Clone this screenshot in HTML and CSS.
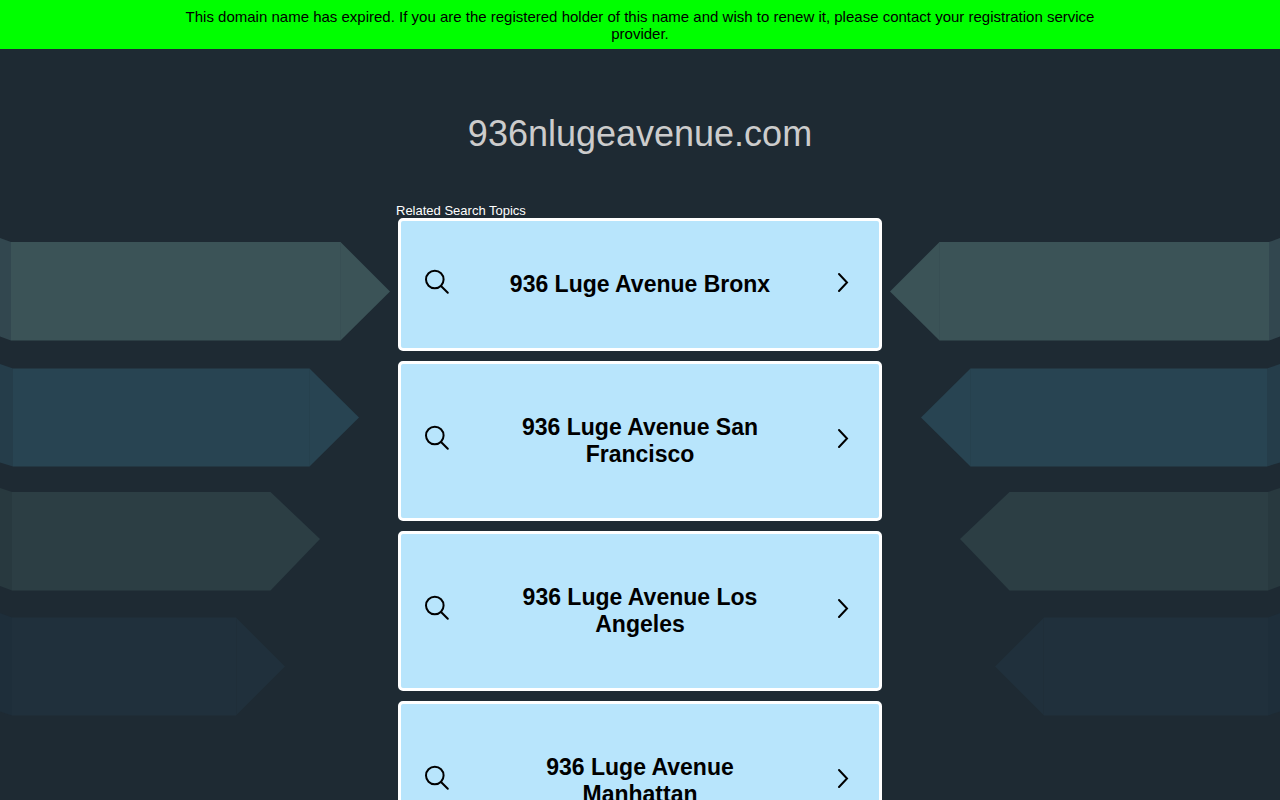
FILE: index.html
```
<!DOCTYPE html>
<html lang="en">
<head>
  <meta charset="UTF-8" />
  <meta name="viewport" content="width=device-width, initial-scale=1" />
  <title>936nlugeavenue.com</title>
  <link rel="stylesheet" href="styles.css">
</head>
<body>

  <!-- shared icons -->
  <svg class="sprite" aria-hidden="true">
    <symbol id="search" viewBox="0 0 26 32">
      <circle cx="9.800" cy="10.500" r="8.800" />
      <path d="M16 17L22.800 23.800" />
    </symbol>
    <symbol id="chevron" viewBox="0 0 26 32">
      <path d="M10 5L18 13.500L10 22" />
    </symbol>
    <symbol id="arrows" viewBox="0 0 390 480">
      <path fill="#32474f" d="M0 2L11 6V104.500L0 100.500z" />
      <path fill="#3b5357" d="M11 6H340.500L390 55.500L340.500 104.500H11z" />
      <path fill="#253d4a" d="M0 128L13 132.500V230.500L0 226.500z" />
      <path fill="#284452" d="M13 132.500H309.500L359 181.500L309.500 230.500H13z" />
      <path fill="#28393f" d="M0 252L12 256V354.500L0 350z" />
      <path fill="#2c3e44" d="M12 256H270.500L320 303L270.500 354.500H12z" />
      <path fill="#1e2e3a" d="M0 377L12 381.500V479.500L0 475.500z" />
      <path fill="#20303c" d="M12 381.500H236L285 430.500L236 479.500H12z" />
      <path fill="none" stroke="#384f54" d="M340.500 7V104" />
      <path fill="none" stroke="#26414e" d="M309.500 133V230" />
      <path fill="none" stroke="#1f2e39" d="M236.500 382V479" />
    </symbol>
  </svg>

  <div class="notice">
    <p>This domain name has expired. If you are the registered holder of this name and wish to renew it, please contact your registration service provider.</p>
  </div>

  <h1>936nlugeavenue.com</h1>

  <main class="content">
    <svg class="arrows" aria-hidden="true"><use href="#arrows" /></svg>

    <section class="topics">
      <h2>Related Search Topics</h2>
      <a class="topic" href="#">
        <svg class="icon" aria-hidden="true"><use href="#search" /></svg>
        <span>936 Luge Avenue Bronx</span>
        <svg class="icon" aria-hidden="true"><use href="#chevron" /></svg>
      </a>
      <a class="topic" href="#">
        <svg class="icon" aria-hidden="true"><use href="#search" /></svg>
        <span>936 Luge Avenue San Francisco</span>
        <svg class="icon" aria-hidden="true"><use href="#chevron" /></svg>
      </a>
      <a class="topic" href="#">
        <svg class="icon" aria-hidden="true"><use href="#search" /></svg>
        <span>936 Luge Avenue Los Angeles</span>
        <svg class="icon" aria-hidden="true"><use href="#chevron" /></svg>
      </a>
      <a class="topic" href="#">
        <svg class="icon" aria-hidden="true"><use href="#search" /></svg>
        <span>936 Luge Avenue Manhattan</span>
        <svg class="icon" aria-hidden="true"><use href="#chevron" /></svg>
      </a>
    </section>

    <svg class="arrows arrows-right" aria-hidden="true"><use href="#arrows" /></svg>
  </main>

</body>
</html>
```
FILE: styles.css
```
body {
  margin: 0;
  font-family: Arial, "Liberation Sans", sans-serif;
  background-color: #1e2a33;
  color: #fff;
}

.sprite {
  display: none;
}

/* Expired notice */
.notice {
  background-color: #00ff00;
  color: #000;
  padding: 8px 180px 7px;
  text-align: center;
}
.notice p {
  margin: 0;
  font-size: 15px;
  line-height: 17px;
}

h1 {
  margin: 64px 0 48px;
  font-size: 36px;
  line-height: 42px;
  font-weight: normal;
  text-align: center;
  color: #ccc;
}

/* Arrows on both sides, topics in the middle */
.content {
  display: grid;
  grid-template-columns: 1fr minmax(auto, 488px) 1fr;
}
.arrows {
  width: 390px;
  height: 480px;
  margin-top: 33px;
}
.arrows-right {
  transform: scaleX(-1);
  justify-self: end;
}

.topics h2 {
  margin: 0;
  font-size: 13px;
  line-height: 15px;
  font-weight: normal;
}
.topic {
  display: flex;
  align-items: center;
  margin: 0 2px 10px;
  padding: 50px 24px;
  border: 3px solid #fff;
  border-radius: 5px;
  background-color: #b8e5fc;
  color: #000;
  text-decoration: none;
}
.topic:hover {
  background-color: #d4effd;
}
.topic span {
  flex: 1;
  margin: 0 50px;
  font-size: 23px;
  line-height: 27px;
  font-weight: bold;
  text-align: center;
}
.icon {
  flex: none;
  width: 26px;
  height: 32px;
  margin: -3px 0;
  fill: none;
  stroke: #000;
  stroke-width: 2;
  stroke-linecap: round;
}
```
